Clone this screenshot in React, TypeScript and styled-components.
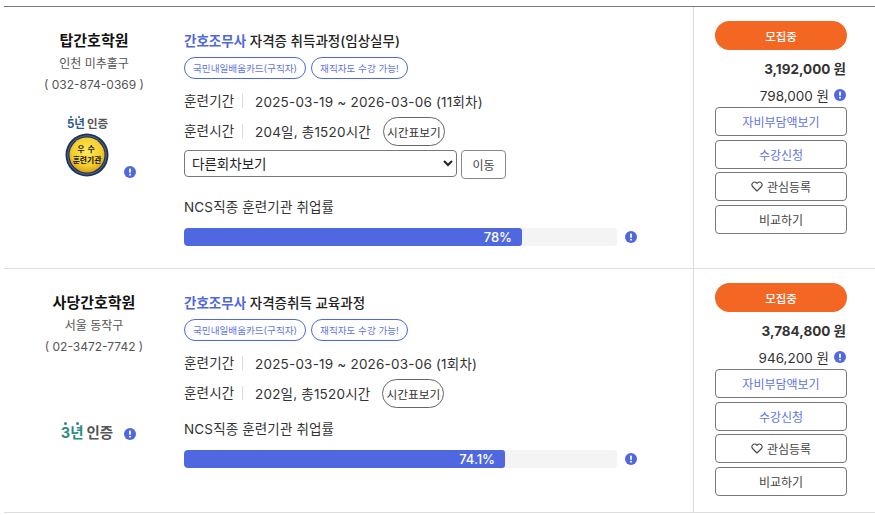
import React from "react";
import styled, { createGlobalStyle } from "styled-components";

const FONT = `"Inter", "Noto Sans CJK KR", sans-serif`;

const Global = createGlobalStyle`
  html, body { margin: 0; padding: 0; background: #fff; }
  body { font-family: ${FONT}; color: #333; overflow: hidden; }
  * { box-sizing: border-box; }
`;

const List = styled.div`
  margin: 6px 0 0 4px;
  border-top: 1px solid #777;
`;
const Row = styled.div<{ $h: number }>`
  display: grid;
  grid-template-columns: 180px 509px 1fr;
  height: ${(p) => p.$h}px;
  border-bottom: 1px solid #ddd;
`;
const Org = styled.div`
  display: flex;
  flex-direction: column;
  align-items: center;
  padding-top: 22px;
`;
const OrgName = styled.div`
  font-size: 15px;
  font-weight: 700;
  line-height: 24px;
  color: #111;
`;
const OrgMeta = styled.div`
  font-size: 12px;
  line-height: 21px;
  color: #555;
`;
const Badges = styled.div<{ $top: number }>`
  position: relative;
  width: 100%;
  margin-top: ${(p) => p.$top}px;
  display: flex;
  flex-direction: column;
  align-items: center;
`;
const YearMark = styled.div`
  font-size: 11.5px;
  font-weight: 700;
  line-height: 16px;
  color: #555;
  display: flex;
  gap: 2px;
  margin-left: -13px;
`;
const YearNum = styled.span<{ $c: string }>`
  position: relative;
  color: ${(p) => p.$c};
`;
const Dots = styled.i<{ $c: string; $s: number }>`
  position: absolute;
  top: ${(p) => 2 - p.$s}px;
  left: 3px;
  right: 5px;
  height: ${(p) => p.$s}px;
  display: flex;
  justify-content: space-between;
  &::before, &::after {
    content: "";
    width: ${(p) => p.$s}px;
    height: ${(p) => p.$s}px;
    border-radius: 50%;
    background: ${(p) => p.$c};
  }
`;
const LargeMark = styled(YearMark)`
  font-size: 14.5px;
  line-height: 20px;
  gap: 3px;
  margin-left: -14px;
`;
const Medal = styled.svg`
  display: block;
  margin: 1px 0 0 -14px;
`;
const BadgeInfo = styled.span<{ $x: number; $y: number }>`
  position: absolute;
  left: ${(p) => p.$x}px;
  top: ${(p) => p.$y}px;
  display: flex;
`;

const Main = styled.div`
  padding-top: 22px;
  display: flex;
  flex-direction: column;
`;
const Title = styled.div`
  font-size: 13.5px;
  font-weight: 500;
  line-height: 24px;
  color: #222;
`;
const TitleKey = styled.b`
  color: #4f68e0;
  font-weight: 700;
`;
const Tags = styled.div`
  display: flex;
  gap: 5px;
  margin-top: 4px;
`;
const Tag = styled.span`
  height: 22px;
  padding: 0 8px;
  display: flex;
  align-items: center;
  border: 1px solid #4f68e0;
  border-radius: 11px;
  font-size: 9.6px;
  color: #5f74e4;
  white-space: nowrap;
`;
const InfoLine = styled.div<{ $top?: number }>`
  display: flex;
  align-items: center;
  height: 30px;
  margin-top: ${(p) => p.$top ?? 0}px;
  font-size: 13.5px;
  letter-spacing: 0.2px;
  color: #333;
`;
const Label = styled.span`
  width: 59px;
  height: 14px;
  line-height: 14px;
  border-right: 1px solid #ddd;
  margin-right: 12px;
  flex: none;
`;
const TimeBtn = styled.button`
  margin-left: 12px;
  height: 29px;
  width: 62px;
  padding: 0;
  background: #fff;
  border: 1px solid #666;
  border-radius: 15px;
  font: 400 11.7px ${FONT};
  color: #333;
`;
const SelectLine = styled.div`
  display: flex;
  gap: 4px;
  margin-top: 4px;
`;
const RoundSelect = styled.select`
  width: 273px;
  height: 27px;
  padding: 1px 3px 0;
  background: #fff;
  border: 1px solid #777;
  border-radius: 4px;
  font: 400 13.5px ${FONT};
  color: #222;
`;
const MoveBtn = styled.button`
  width: 45px;
  height: 29px;
  padding: 0;
  background: #fff;
  border: 1px solid #888;
  border-radius: 4px;
  font: 400 12px ${FONT};
  color: #444;
`;
const RateLabel = styled.div<{ $top: number }>`
  margin-top: ${(p) => p.$top}px;
  font-size: 13.5px;
  letter-spacing: 0.15px;
  line-height: 20px;
  color: #333;
`;
const BarLine = styled.div`
  display: flex;
  align-items: center;
  gap: 8px;
  margin-top: 11px;
`;
const Track = styled.div`
  width: 433px;
  height: 18px;
  background: #f4f4f4;
  border-radius: 4px;
  overflow: hidden;
`;
const Fill = styled.div`
  height: 100%;
  background: #4f68e0;
  border-radius: 3px;
  color: #fff;
  font-size: 13px;
  font-weight: 500;
  line-height: 18px;
  text-align: right;
  padding-right: 10px;
`;

const Side = styled.div`
  border-left: 1px solid #ddd;
  padding: 14px 0 0 21px;
  display: flex;
  flex-direction: column;
`;
const Status = styled.div`
  width: 132px;
  height: 29px;
  border-radius: 15px;
  background: #f36722;
  color: #fff;
  font-size: 11.5px;
  font-weight: 500;
  display: flex;
  align-items: center;
  justify-content: center;
`;
const Price = styled.div`
  width: 132px;
  margin-top: 9px;
  padding-right: 1px;
  font-size: 13.5px;
  font-weight: 700;
  line-height: 20px;
  text-align: right;
  color: #333;
`;
const Sub = styled.div`
  width: 132px;
  margin-top: 7px;
  height: 20px;
  display: flex;
  justify-content: flex-end;
  align-items: center;
  gap: 5px;
  padding-right: 1px;
  font-size: 13.5px;
  line-height: 20px;
  color: #333;
`;
const SubIcon = styled.span`
  display: flex;
  margin-bottom: 2px;
`;
const Actions = styled.div`
  display: flex;
  flex-direction: column;
  gap: 3.6px;
  margin-top: 1px;
`;
const Action = styled.button<{ $blue?: boolean }>`
  width: 132px;
  height: 29px;
  padding: 0;
  background: #fff;
  border: 1px solid #777;
  border-radius: 4px;
  font: 400 12px ${FONT};
  color: ${(p) => (p.$blue ? "#5f74e4" : "#444")};
  display: flex;
  align-items: center;
  justify-content: center;
  gap: 4px;
`;

const Info = () => (
  <svg width="12" height="12" viewBox="0 0 12 12">
    <circle cx="6" cy="6" r="6" fill="#4f68e0" />
    <rect x="5.1" y="2.6" width="1.8" height="4.2" rx="0.6" fill="#fff" />
    <rect x="5.1" y="7.7" width="1.8" height="1.8" rx="0.6" fill="#fff" />
  </svg>
);
const Heart = () => (
  <svg width="12" height="11" viewBox="0 0 24 22" fill="none" stroke="#444" strokeWidth="2.2">
    <path d="M12 20 3.5 11.5a5.4 5.4 0 0 1 0-7.6 5.4 5.4 0 0 1 7.6 0l.9.9.9-.9a5.4 5.4 0 0 1 7.6 0 5.4 5.4 0 0 1 0 7.6z" />
  </svg>
);
const MedalIcon = () => (
  <Medal width="44" height="44" viewBox="0 0 44 44">
    <defs>
      <radialGradient id="gold" cx="50%" cy="40%" r="60%">
        <stop offset="0%" stopColor="#ffe95a" />
        <stop offset="70%" stopColor="#f6cd2a" />
        <stop offset="100%" stopColor="#d99f1c" />
      </radialGradient>
    </defs>
    <circle cx="22" cy="22" r="21.5" fill="#1f3358" />
    <circle cx="22" cy="22" r="19.2" fill="none" stroke="#6b7690" strokeWidth="0.8" />
    <circle cx="22" cy="22" r="17.5" fill="url(#gold)" />
    <text x="22.5" y="19" textAnchor="middle" fontSize="8" fontWeight="700" fill="#1a1a1a" letterSpacing="3">우수</text>
    <text x="22" y="29.5" textAnchor="middle" fontSize="7.8" fontWeight="700" fill="#111">훈련기관</text>
  </Medal>
);

type Item = {
  h: number; name: string; area: string; tel: string; titleRest: string; period: string; time: string;
  rate: string; width: number; price: string; sub: string; hasSelect: boolean;
};
const items: Item[] = [
  { h: 262, name: "탑간호학원", area: "인천 미추홀구", tel: "( 032-874-0369 )", titleRest: " 자격증 취득과정(임상실무)", period: "2025-03-19 ~ 2026-03-06 (11회차)", time: "204일, 총1520시간", rate: "78%", width: 338, price: "3,192,000 원", sub: "798,000 원", hasSelect: true },
  { h: 244, name: "사당간호학원", area: "서울 동작구", tel: "( 02-3472-7742 )", titleRest: " 자격증취득 교육과정", period: "2025-03-19 ~ 2026-03-06 (1회차)", time: "202일, 총1520시간", rate: "74.1%", width: 321, price: "3,784,800 원", sub: "946,200 원", hasSelect: false },
];

export default function App() {
  return (
    <>
      <Global />
      <List>
        {items.map((it) => (
          <Row key={it.name} $h={it.h}>
            <Org>
              <OrgName>{it.name}</OrgName>
              <OrgMeta>{it.area}</OrgMeta>
              <OrgMeta>{it.tel}</OrgMeta>
              {it.hasSelect ? (
                <Badges $top={21}>
                  <YearMark><YearNum $c="#2c5a8c"><Dots $c="#2c5a8c" $s={2} />5년</YearNum>인증</YearMark>
                  <MedalIcon />
                  <BadgeInfo $x={120} $y={50}><Info /></BadgeInfo>
                </Badges>
              ) : (
                <Badges $top={66}>
                  <LargeMark><YearNum $c="#2b8a86"><Dots $c="#2b8a86" $s={3} />3년</YearNum>인증</LargeMark>
                  <BadgeInfo $x={120} $y={5}><Info /></BadgeInfo>
                </Badges>
              )}
            </Org>
            <Main>
              <Title><TitleKey>간호조무사</TitleKey>{it.titleRest}</Title>
              <Tags>
                <Tag>국민내일배움카드(구직자)</Tag>
                <Tag>재직자도 수강 가능!</Tag>
              </Tags>
              <InfoLine $top={7}>
                <Label>훈련기간</Label><span>{it.period}</span>
              </InfoLine>
              <InfoLine>
                <Label>훈련시간</Label><span>{it.time}</span>
                <TimeBtn>시간표보기</TimeBtn>
              </InfoLine>
              {it.hasSelect && (
                <SelectLine>
                  <RoundSelect defaultValue="a"><option value="a">다른회차보기</option></RoundSelect>
                  <MoveBtn>이동</MoveBtn>
                </SelectLine>
              )}
              <RateLabel $top={it.hasSelect ? 18 : 11}>NCS직종 훈련기관 취업률</RateLabel>
              <BarLine>
                <Track><Fill style={{ width: it.width }}>{it.rate}</Fill></Track>
                <Info />
              </BarLine>
            </Main>
            <Side>
              <Status>모집중</Status>
              <Price>{it.price}</Price>
              <Sub>{it.sub}<SubIcon><Info /></SubIcon></Sub>
              <Actions>
                <Action $blue>자비부담액보기</Action>
                <Action $blue>수강신청</Action>
                <Action><Heart />관심등록</Action>
                <Action>비교하기</Action>
              </Actions>
            </Side>
          </Row>
        ))}
      </List>
    </>
  );
}
